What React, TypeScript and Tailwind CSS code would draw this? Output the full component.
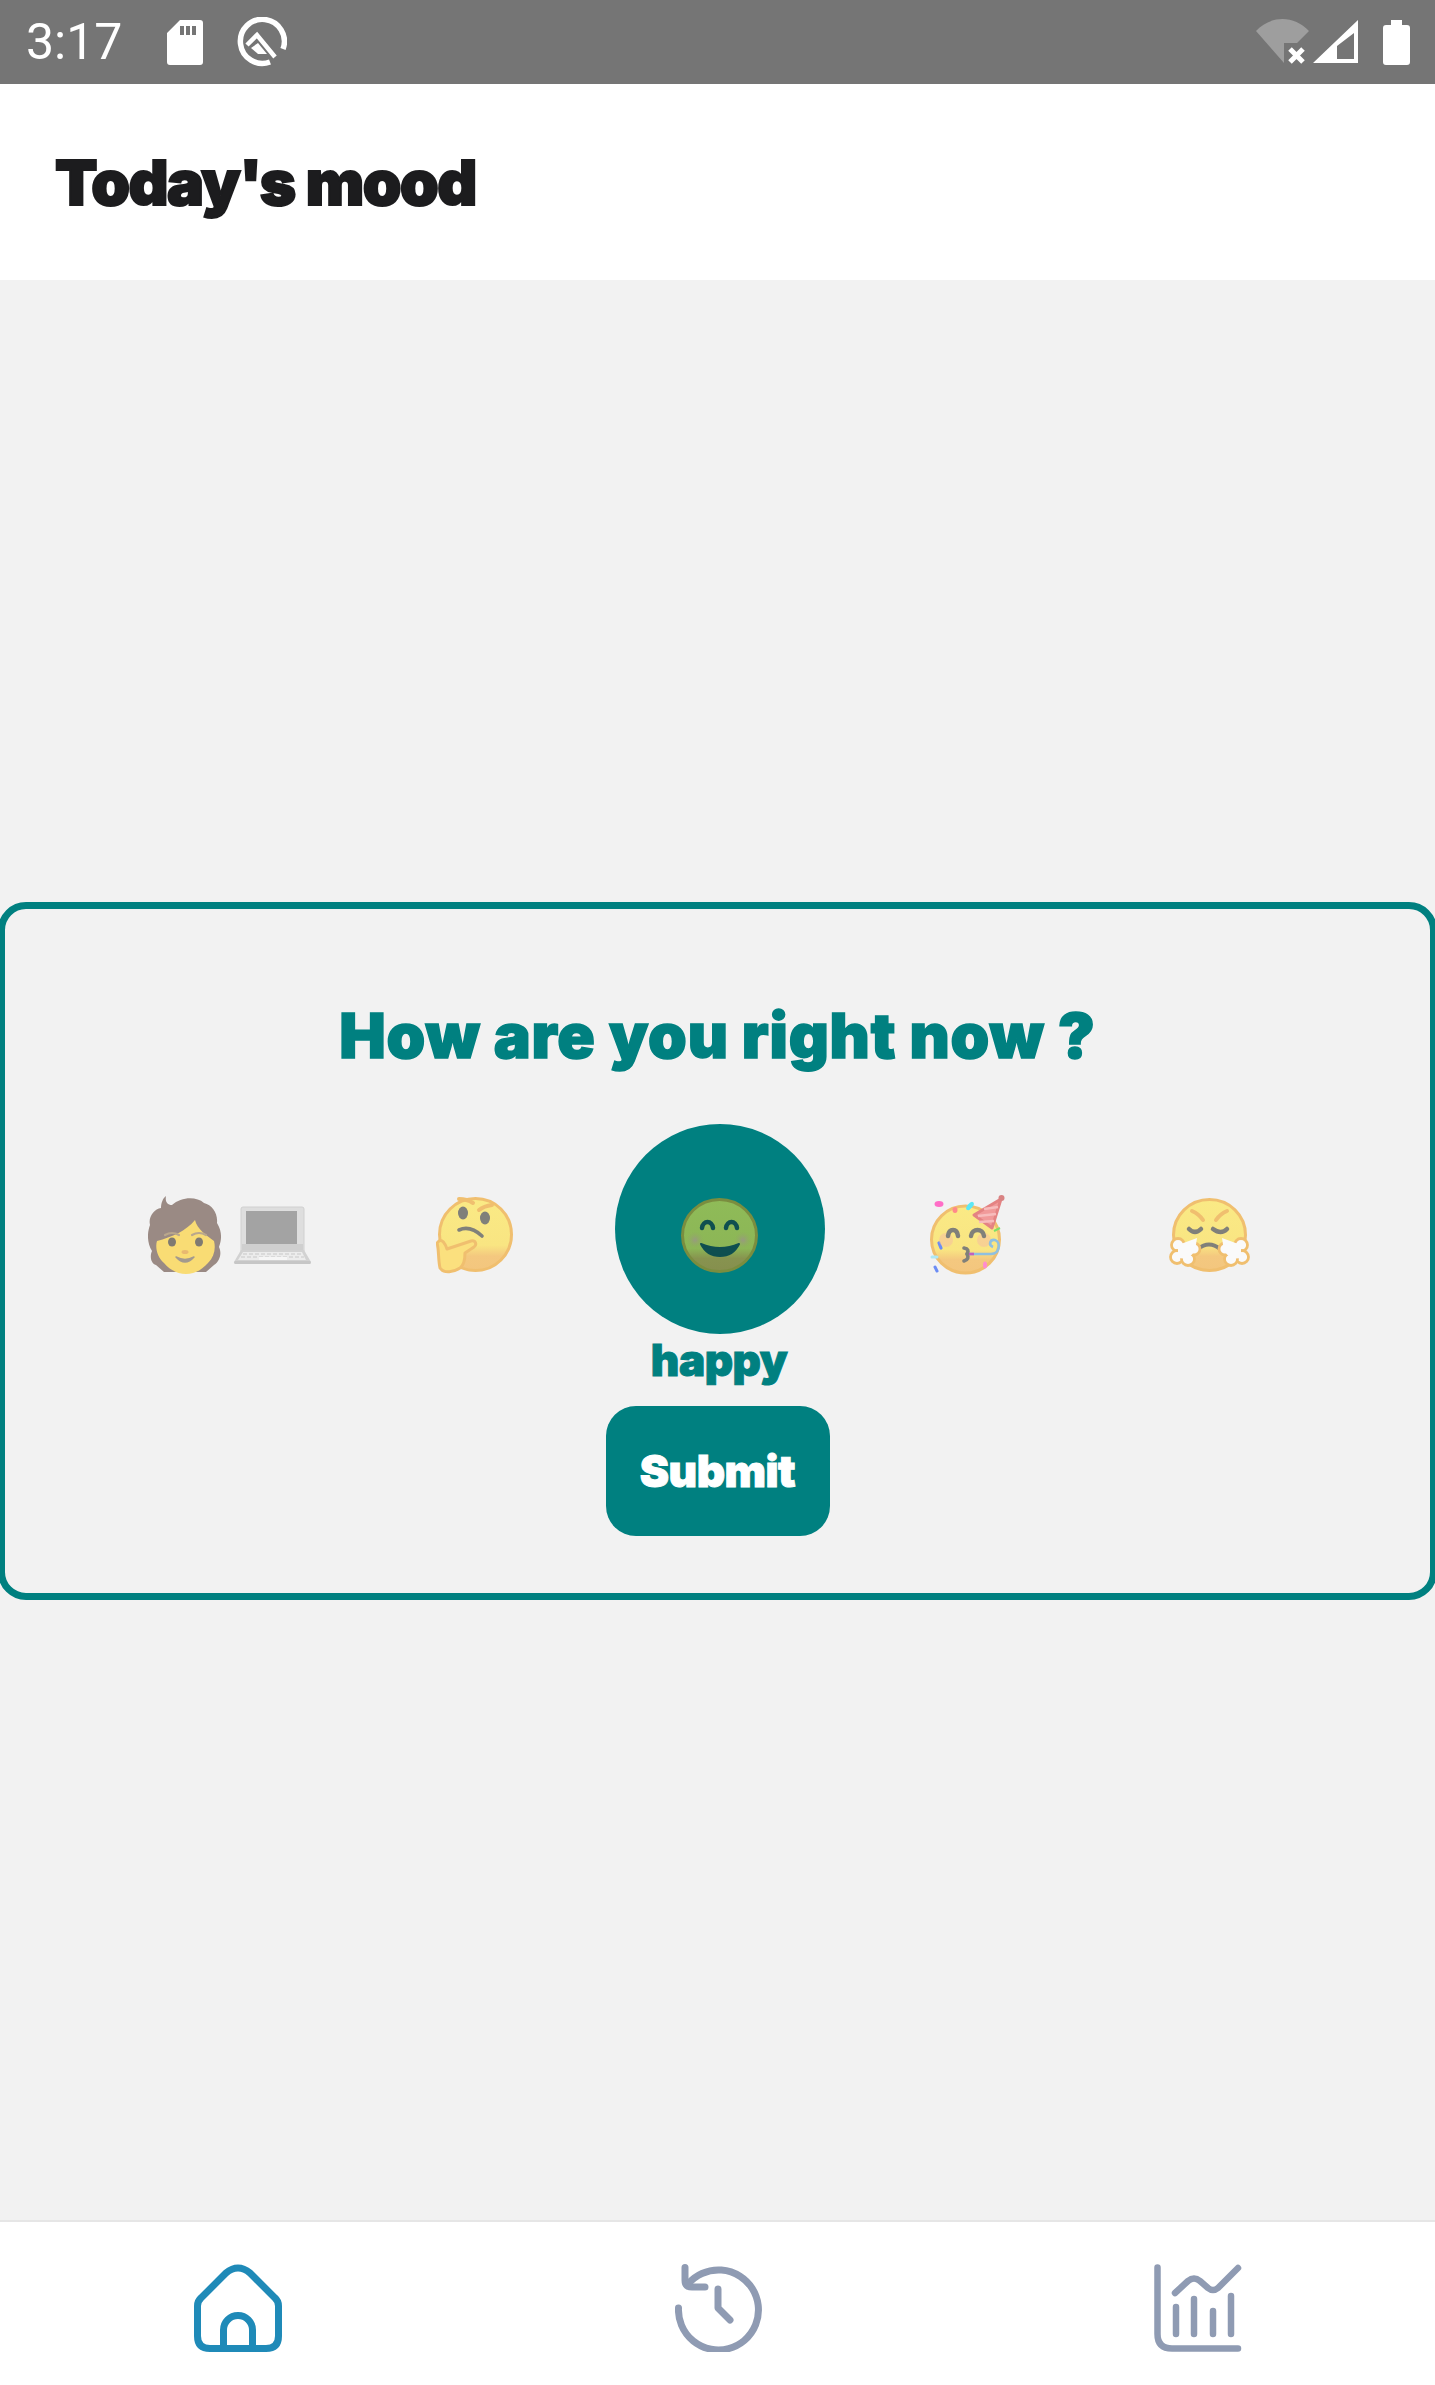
import React from "react";

function SdCard() {
  return (
    <svg width="36" height="45" viewBox="0 0 36 45">
      <path fill="#fff" fillRule="evenodd" d="M13 0H33a3 3 0 0 1 3 3V42a3 3 0 0 1-3 3H3a3 3 0 0 1-3-3V13Z M13 6V15H17V6Z M19 6V15H23V6Z M25 6V15H29V6Z" />
    </svg>
  );
}
function QLogo() {
  return (
    <svg width="50" height="50" viewBox="0 0 50 50">
      <path fill="none" stroke="#fff" strokeWidth="5.5" d="M33 45A22 22 0 1 1 46 32" />
      <path fill="none" stroke="#fff" strokeWidth="4.5" d="M10 28 20 18 38 40" />
      <path fill="#fff" d="M14 31 21 26 30 37H21Z" />
    </svg>
  );
}
function StatusRight() {
  return (
    <div className="flex items-center">
      <svg width="57" height="46" viewBox="0 0 57 46">
        <path fill="#9e9e9e" d="M0 12C15-4 38-4 53 12L41 24H28V44Z" />
        <path stroke="#fff" strokeWidth="5" d="M34 30 47 43M47 30 34 43" />
      </svg>
      <svg width="46" height="46" viewBox="0 0 46 46">
        <path fill="#fff" fillRule="evenodd" d="M0 44 45 1V44Z M24 40H41V14L24 27Z" />
      </svg>
      <svg className="ml-[24px]" width="27" height="45" viewBox="0 0 27 45">
        <path fill="#fff" d="M8 0H19V5H24a3 3 0 0 1 3 3V42a3 3 0 0 1-3 3H3a3 3 0 0 1-3-3V8a3 3 0 0 1 3-3H8Z" />
      </svg>
    </div>
  );
}

function FaceGrad({ id }: { id: string }) {
  return (
    <linearGradient id={id} x1="0" y1="0" x2="0" y2="1">
      <stop offset="0" stopColor="#faea85" />
      <stop offset="0.65" stopColor="#f9e582" />
      <stop offset="0.8" stopColor="#f4c87f" />
      <stop offset="1" stopColor="#f3c67e" />
    </linearGradient>
  );
}

function PersonLaptop() {
  return (
    <svg width="163" height="80" viewBox="0 0 163 80">
      <path fill="#9a8a84" d="M18 1C17 6 19 10 24 10C33 2 48 1 56 8C64 10 70 18 69 28C74 36 74 44 71 52C74 58 72 66 66 70L58 77H16L8 70C2 68 2 60 4 56C-1 48-1 38 2 30C0 22 6 14 13 13C13 8 15 3 18 1Z" />
      <path fill="#f9dc74" d="M47 25C49 34 58 40 66 46C68 54 66 62 60 68C54 75 46 79 38 79C29 79 21 74 16 68C9 62 7 52 9 46C24 42 38 36 47 25Z" />
      <ellipse cx="24" cy="47" rx="4" ry="4.5" fill="#7f7a72" />
      <ellipse cx="51" cy="47" rx="4" ry="4.5" fill="#7f7a72" />
      <path d="M17 40Q24 36 31 40M44 40Q51 36 58 40" stroke="#b9a78c" strokeWidth="2.2" fill="none" strokeLinecap="round" />
      <path d="M28 62Q37 67 46 62Q37 72 28 62Z" fill="#a39a8e" stroke="#a39a8e" strokeWidth="1.5" strokeLinejoin="round" />
      <ellipse cx="37" cy="57" rx="3.5" ry="2" fill="#e8b970" />
      <rect x="93" y="12" width="63" height="46" rx="2" fill="#dedede" stroke="#d0d0d0" strokeWidth="1" />
      <rect x="98" y="16" width="51" height="33" fill="#a3a3a3" />
      <rect x="94" y="49" width="61" height="6" fill="#cfcfcf" />
      <path d="M93 55H156L163 67H86Z" fill="#d2d2d2" />
      <rect x="86" y="66" width="77" height="3" rx="1.5" fill="#c6c6c6" />
      <path d="M95 57H154L158 65H90Z" fill="#ececec" />
      <path d="M95 59H154M93 62H156" stroke="#d4d4d4" strokeWidth="1.4" strokeDasharray="4 2" />
      <rect x="111" y="62" width="28" height="3" fill="#f6f6f6" />
    </svg>
  );
}

function Thinking() {
  return (
    <svg width="77" height="77" viewBox="0 0 77 77">
      <defs><FaceGrad id="f1" /></defs>
      <ellipse cx="39.5" cy="37.5" rx="36" ry="36" fill="url(#f1)" stroke="#f0bf6f" strokeWidth="3" />
      <path d="M23 2Q31 2 37 6" stroke="#f0bf6f" strokeWidth="4" fill="none" strokeLinecap="round" />
      <path d="M43 13Q48 9 56 8" stroke="#f0bf6f" strokeWidth="4" fill="none" strokeLinecap="round" />
      <ellipse cx="27" cy="16" rx="5" ry="6.5" fill="#80807a" />
      <ellipse cx="49" cy="21" rx="5" ry="6.5" fill="#80807a" />
      <path d="M23 33Q34 28 46 39" stroke="#80807a" strokeWidth="3.6" fill="none" strokeLinecap="round" />
      <path d="M3 44C6 42 9 46 11 52L35 44C40 43 41 48 38 50L29 56C29 63 28 68 24 71C18 75 8 77 4 71C2 62 3 52 1 46Z" fill="#fbe07e" stroke="#f0bf6f" strokeWidth="3" strokeLinejoin="round" />
    </svg>
  );
}

function Happy() {
  return (
    <svg width="77" height="75" viewBox="0 0 77 75">
      <defs>
        <linearGradient id="gface" x1="0" y1="0" x2="0" y2="1">
          <stop offset="0" stopColor="#8fbb58" />
          <stop offset="0.68" stopColor="#8cb656" />
          <stop offset="0.82" stopColor="#87934f" />
          <stop offset="1" stopColor="#868f4e" />
        </linearGradient>
        <radialGradient id="blush">
          <stop offset="0" stopColor="#989a80" />
          <stop offset="1" stopColor="#8fae5a" stopOpacity="0" />
        </radialGradient>
      </defs>
      <ellipse cx="38.5" cy="37.5" rx="37" ry="36" fill="url(#gface)" stroke="#7a8d3f" strokeWidth="3" />
      <circle cx="14" cy="42" r="9" fill="url(#blush)" />
      <circle cx="62" cy="42" r="9" fill="url(#blush)" />
      <path d="M21 30C22 22 31 22 32 30M45 30C46 22 55 22 56 30" stroke="#0f4f50" strokeWidth="4.5" fill="none" strokeLinecap="round" />
      <path d="M20 46Q39 54 58 46Q52 58 39 58Q26 58 20 46Z" fill="#0f4f50" stroke="#0f4f50" strokeWidth="2" strokeLinejoin="round" />
    </svg>
  );
}

function Party() {
  return (
    <svg width="76" height="80" viewBox="0 0 76 80">
      <defs><FaceGrad id="f2" /></defs>
      <ellipse cx="36.5" cy="44.5" rx="34" ry="33.5" fill="url(#f2)" stroke="#f0bf6f" strokeWidth="3" />
      <path d="M45 20 72 4 63 33Z" fill="#f19a9a" stroke="#e48383" strokeWidth="3" strokeLinejoin="round" />
      <circle cx="72.5" cy="3" r="3" fill="#d98383" />
      <path d="M55 14 69 12M49 21 67 19M50 27 65 26" stroke="#f7bcbc" strokeWidth="2.5" />
      <ellipse cx="10" cy="9" rx="4.5" ry="3" fill="#ff6ec7" />
      <ellipse cx="26" cy="15" rx="2.5" ry="3" fill="#ff8a8a" />
      <ellipse cx="41" cy="11" rx="2.5" ry="5" fill="#5ce8f5" transform="rotate(40 41 11)" />
      <path d="M65 36 71 33" stroke="#7de06a" strokeWidth="2" />
      <path d="M10 48 12 53" stroke="#6b8cf5" strokeWidth="3.2" strokeLinecap="round" />
      <path d="M3 62H8" stroke="#aee8f5" strokeWidth="3" strokeLinecap="round" />
      <path d="M6 72 8 76" stroke="#6b8cf5" strokeWidth="3" strokeLinecap="round" />
      <ellipse cx="56" cy="70" rx="2" ry="3.5" fill="#ff8ccf" />
      <circle cx="17" cy="45" r="7" fill="#f5c0a0" opacity="0.55" />
      <circle cx="55" cy="45" r="7" fill="#f5c0a0" opacity="0.55" />
      <path d="M19 41C20 33 28 33 29 41M42 41C43 33 54 33 55 41" stroke="#80807a" strokeWidth="4.5" fill="none" strokeLinecap="round" />
      <path d="M35 53Q41 54 38 59Q41 64 35 66" stroke="#80807a" strokeWidth="3.6" fill="none" strokeLinecap="round" />
      <path d="M41 59H62C71 59 72 47 66 45C61 44 59 50 64 52" stroke="#8fc0e0" strokeWidth="2.6" fill="none" />
      <path d="M40 59H45" stroke="#c060c0" strokeWidth="2.6" />
    </svg>
  );
}

function Steam() {
  return (
    <svg width="83" height="74" viewBox="0 0 83 74">
      <defs><FaceGrad id="f3" /></defs>
      <ellipse cx="41.5" cy="37" rx="36" ry="35.5" fill="url(#f3)" stroke="#f0bf6f" strokeWidth="3" />
      <path d="M24 13Q31 16 35 22M59 13Q52 16 48 22" stroke="#f0bf6f" strokeWidth="4" fill="none" strokeLinecap="round" />
      <path d="M21 31Q27 37 33 31M45 31Q53 37 59 31" stroke="#80807a" strokeWidth="4.5" fill="none" strokeLinecap="round" />
      <path d="M30 51Q41 42 52 51" stroke="#80807a" strokeWidth="4" fill="none" strokeLinecap="round" />
      <g fill="#fafafa" stroke="#f0bf6f" strokeWidth="2.8">
        <circle cx="10" cy="47" r="6.5" />
        <circle cx="9" cy="59" r="6.5" />
        <circle cx="20" cy="61" r="6.5" />
        <circle cx="26" cy="51" r="6" />
        <circle cx="73" cy="47" r="6.5" />
        <circle cx="74" cy="59" r="6.5" />
        <circle cx="63" cy="61" r="6.5" />
        <circle cx="57" cy="51" r="6" />
      </g>
      <path fill="#fafafa" d="M29 40 10 47 10 60 20 61 27 53Z M54 40 73 47 73 60 63 61 56 53Z" />
    </svg>
  );
}

function HomeIcon() {
  return (
    <svg width="88" height="88" viewBox="0 0 88 88" fill="none" stroke="#1f8ab8" strokeWidth="7" strokeLinejoin="round" strokeLinecap="round">
      <path d="M3.5 42Q3.5 37 7 34L32 9Q44-1 56 9L81 34Q84.5 37 84.5 42V72Q84.5 84.5 72 84.5H16Q3.5 84.5 3.5 72Z" />
      <path d="M29.5 84.5V66A14.5 14.5 0 0 1 58.5 66V84.5" />
    </svg>
  );
}
function HistoryIcon() {
  return (
    <svg width="87" height="88" viewBox="0 0 87 88" fill="none" stroke="#8f9bb3" strokeWidth="7" strokeLinecap="round" strokeLinejoin="round">
      <path d="M10 3.5V16Q10 23 17 23H30" />
      <path d="M13 20A40 40 0 1 1 3.5 44" />
      <path d="M43 25V44L55 56" />
    </svg>
  );
}
function ChartIcon() {
  return (
    <svg width="88" height="88" viewBox="0 0 88 88" fill="none" stroke="#8f9bb3" strokeWidth="6.5" strokeLinecap="round" strokeLinejoin="round">
      <path d="M3.5 3.5V70Q3.5 84.5 18 84.5H84" />
      <path d="M21 29 34 17Q40 12 46 17L54 24Q59 28 64 24L84 4" />
      <path d="M22 43V70M40 35V70M59 47V70M77 32V70" />
    </svg>
  );
}

export default function App() {
  const display = { fontFamily: '"Inter", "Noto Sans", sans-serif' };
  return (
    <div className="w-[1435px] h-[2385px] flex flex-col bg-[#f2f2f2] overflow-hidden">
      <div className="h-[84px] bg-[#757575] flex items-center justify-between pl-[26px] pr-[25px] shrink-0">
        <div className="flex items-center">
          <span className="text-white text-[50px] leading-none w-[141px] font-['Roboto',sans-serif]">3:17</span>
          <SdCard />
          <div className="ml-[34px]">
            <QLogo />
          </div>
        </div>
        <StatusRight />
      </div>

      <header className="h-[196px] bg-white flex items-center pl-[55px] shrink-0">
        <h1 style={display} className="text-[62px] font-black text-[#1c1c1e] leading-none mt-[2px] tracking-[-1.5px] [-webkit-text-stroke:2px_#1c1c1e]">Today's mood</h1>
      </header>

      <main className="flex-1 pt-[622px]">
        <section className="mx-[-2px] h-[698px] border-[7px] border-[#008080] rounded-[28px] flex flex-col items-center pt-[91px]">
          <h2 style={display} className="text-[62px] font-black text-[#008080] leading-[72px] tracking-[0.8px] [-webkit-text-stroke:1.5px_#008080]">How are you right now ?</h2>
          <div className="mt-[52px] ml-[4px] flex justify-center">
            <div className="w-[245px] h-[210px] flex items-center justify-center pt-[12px]"><PersonLaptop /></div>
            <div className="w-[245px] h-[210px] flex items-center justify-center pt-[12px]"><Thinking /></div>
            <div className="w-[245px] h-[210px] flex justify-center">
              <div className="w-[210px] h-[210px] rounded-full bg-[#008080] flex items-center justify-center pt-[12px]"><Happy /></div>
            </div>
            <div className="w-[245px] h-[210px] flex items-center justify-center pt-[12px] pl-[5px]"><Party /></div>
            <div className="w-[245px] h-[210px] flex items-center justify-center pt-[12px]"><Steam /></div>
          </div>
          <div style={display} className="text-[44px] font-black text-[#008080] leading-[56px] mt-[-2px] ml-[3px] tracking-[-0.5px] [-webkit-text-stroke:1px_#008080]">happy</div>
          <button style={display} className="mt-[18px] w-[224px] h-[130px] rounded-[30px] bg-[#008080] text-white text-[44px] font-black tracking-[-0.5px] [-webkit-text-stroke:1px_#fff]">Submit</button>
        </section>
      </main>

      <nav className="h-[165px] bg-white border-t-2 border-[#e6e6e6] shrink-0 grid grid-cols-3 items-start pt-[42px]">
        <div className="flex justify-center mr-[2px]"><HomeIcon /></div>
        <div className="flex justify-center ml-[3px]"><HistoryIcon /></div>
        <div className="flex justify-center ml-[4px]"><ChartIcon /></div>
      </nav>
    </div>
  );
}
